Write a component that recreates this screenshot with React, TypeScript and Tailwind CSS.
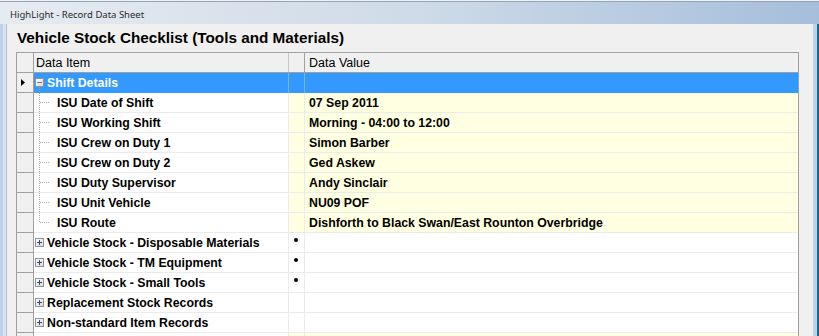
import React from 'react';

type Row = {
  kind: 'group' | 'child' | 'blank';
  label?: string;
  value?: string;
  open?: boolean;
  selected?: boolean;
  dot?: boolean;
  last?: boolean;
};

const rows: Row[] = [
  { kind: 'group', label: 'Shift Details', open: true, selected: true },
  { kind: 'child', label: 'ISU Date of Shift', value: '07 Sep 2011' },
  { kind: 'child', label: 'ISU Working Shift', value: 'Morning - 04:00 to 12:00' },
  { kind: 'child', label: 'ISU Crew on Duty 1', value: 'Simon Barber' },
  { kind: 'child', label: 'ISU Crew on Duty 2', value: 'Ged Askew' },
  { kind: 'child', label: 'ISU Duty Supervisor', value: 'Andy Sinclair' },
  { kind: 'child', label: 'ISU Unit Vehicle', value: 'NU09 POF' },
  { kind: 'child', label: 'ISU Route', value: 'Dishforth to Black Swan/East Rounton Overbridge', last: true },
  { kind: 'group', label: 'Vehicle Stock - Disposable Materials', dot: true },
  { kind: 'group', label: 'Vehicle Stock - TM Equipment', dot: true },
  { kind: 'group', label: 'Vehicle Stock - Small Tools', dot: true },
  { kind: 'group', label: 'Replacement Stock Records' },
  { kind: 'group', label: 'Non-standard Item Records' },
  { kind: 'blank' },
];

function ExpandBox({ open }: { open?: boolean }) {
  return (
    <svg width="13" height="19" className="shrink-0">
      <defs>
        <linearGradient id={open ? 'bxo' : 'bxc'} x1="0" y1="0" x2="1" y2="1">
          <stop offset="0" stopColor="#ffffff" />
          <stop offset="1" stopColor="#d6d6d6" />
        </linearGradient>
      </defs>
      <rect x="1.5" y="5.5" width="8" height="8" fill={`url(#${open ? 'bxo' : 'bxc'})`} stroke="#8f9399" />
      <line x1="3" y1="9.5" x2="8" y2="9.5" stroke={open ? '#7a7f86' : '#3b4a6b'} />
      {!open && <line x1="5.5" y1="7" x2="5.5" y2="12" stroke="#3b4a6b" />}
      {open && <line x1="5.5" y1="14" x2="5.5" y2="19" stroke="#a0a0a0" strokeDasharray="1 1" />}
    </svg>
  );
}

function TreeLine({ last }: { last?: boolean }) {
  return (
    <svg width="23" height="19" className="shrink-0">
      <line x1="5.5" y1="0" x2="5.5" y2={last ? 10 : 19} stroke="#a8a8a8" strokeDasharray="1 1" />
      <line x1="6" y1="9.5" x2="15" y2="9.5" stroke="#a8a8a8" strokeDasharray="1 1" />
    </svg>
  );
}

function GridRow({ row }: { row: Row }) {
  const sel = row.selected;
  const yellow = row.kind !== 'group';
  const valueBg = sel ? 'bg-[#3399ff]' : yellow ? 'bg-[#ffffe1]' : 'bg-white';
  const sep = sel ? 'border-b-[#3399ff]' : 'border-b-[#ebebeb]';
  return (
    <div className="flex h-[20px]">
      <div className="w-[17px] h-[20px] shrink-0 bg-[#f0f0f0] border-r border-r-[#a0a0a0] border-b border-b-[#a0a0a0]">
        {sel && (
          <svg width="16" height="19">
            <polygon points="4,6 8,9.5 4,13" fill="#000" />
          </svg>
        )}
      </div>
      <div
        className={`w-[255px] h-[20px] shrink-0 flex items-center border-r border-b ${sep} ${
          sel ? 'bg-[#3399ff] border-r-[#6fb6ff] text-white' : 'bg-white border-r-[#ebebeb] text-black'
        }`}
      >
        {row.kind === 'group' && (
          <>
            <ExpandBox open={row.open} />
            <span className="font-bold whitespace-nowrap mt-[2px]">{row.label}</span>
          </>
        )}
        {row.kind === 'child' && (
          <>
            <TreeLine last={row.last} />
            <span className="font-bold whitespace-nowrap mt-[2px]">{row.label}</span>
          </>
        )}
      </div>
      <div
        className={`w-[16px] h-[20px] shrink-0 border-r border-b ${sep} ${valueBg} ${
          sel ? 'border-r-[#6fb6ff]' : 'border-r-[#ebebeb]'
        }`}
      >
        {row.dot && <div className="w-[4px] h-[4px] rounded-full bg-black ml-[5px] mt-[5px]" />}
      </div>
      <div className={`flex-1 h-[20px] flex items-center pl-[4px] border-b ${sep} ${valueBg}`}>
        {row.value && <span className="font-bold whitespace-nowrap text-black mt-[2px]">{row.value}</span>}
      </div>
    </div>
  );
}

export default function App() {
  return (
    <div className="w-[819px] h-[336px] overflow-hidden flex flex-col bg-[#eef2f6] font-['Liberation_Sans',Arial,sans-serif]">
      <div className="h-[335px] mt-[1px] flex flex-col border-t border-t-[#95a4b5] bg-gradient-to-r from-[#e6ebf1] via-[#cfdbe8] to-[#a6bedb]">
        {/* title bar */}
        <div className="h-[22px] shrink-0 flex items-center pl-[10px] pt-[4px]">
          <span className="text-[9.5px] text-[#2a2a2a] font-['Noto_Sans','Liberation_Sans',sans-serif]">
            HighLight - Record Data Sheet
          </span>
        </div>
        <div className="flex flex-1 min-h-0">
          {/* left frame */}
          <div className="w-[7px] shrink-0 flex">
            <div className="w-[3px] bg-[#bdd1e8]" />
            <div className="w-[3px] bg-[#d9e5f1]" />
            <div className="w-[1px] bg-[#b4c0cc]" />
          </div>
          {/* client */}
          <div className="flex-1 bg-[#f0f0f0] flex flex-col">
            <div className="h-[28px] shrink-0 flex items-center pl-[10px] pt-[1px]">
              <h1 className="text-[15.3px] font-bold text-black">Vehicle Stock Checklist (Tools and Materials)</h1>
            </div>
            <div className="ml-[9px] w-[783px] border-l border-r border-t border-[#a0a0a0] bg-white text-[12.3px]">
              {/* header */}
              <div className="flex h-[20px] bg-[#f0f0f0] border-b border-b-[#a0a0a0] text-[12.5px]">
                <div className="w-[17px] shrink-0 border-r border-r-[#a0a0a0]" />
                <div className="w-[255px] shrink-0 flex items-center pl-[2px] pt-[2px] border-r border-r-[#c8c8c8]">Data Item</div>
                <div className="w-[16px] shrink-0 border-r border-r-[#a0a0a0]" />
                <div className="flex-1 flex items-center pl-[4px] pt-[2px]">Data Value</div>
              </div>
              {rows.map((r, i) => (
                <GridRow key={i} row={r} />
              ))}
            </div>
          </div>
          {/* right frame */}
          <div className="w-[6px] shrink-0 flex">
            <div className="w-[4px] bg-[#bcd3ec]" />
            <div className="w-[2px] bg-[#1d6a89]" />
          </div>
        </div>
      </div>
    </div>
  );
}
